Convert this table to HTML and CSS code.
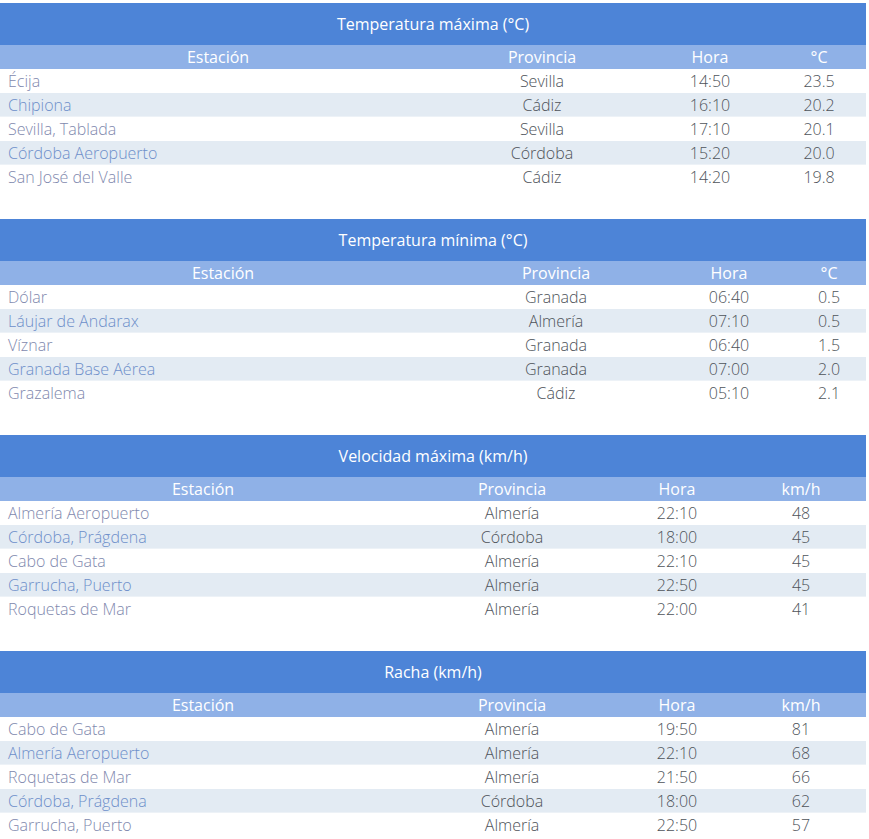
FILE: index.html
```html
<!DOCTYPE html>
<html lang="es">
<head>
<meta charset="utf-8">
<title>Extremos</title>
<link rel="stylesheet" href="styles.css">
</head>
<body>
<div class="page">

<table class="ext t-tmax">
<colgroup><col class="c1"><col class="c2"><col class="c3"><col class="c4"></colgroup>
<thead>
<tr class="title"><th colspan="4">Temperatura máxima (°C)</th></tr>
<tr class="head"><th>Estación</th><th>Provincia</th><th>Hora</th><th>°C</th></tr>
</thead>
<tbody>
<tr><td class="st"><a href="#">Écija</a></td><td>Sevilla</td><td>14:50</td><td>23.5</td></tr>
<tr><td class="st"><a href="#">Chipiona</a></td><td>Cádiz</td><td>16:10</td><td>20.2</td></tr>
<tr><td class="st"><a href="#">Sevilla, Tablada</a></td><td>Sevilla</td><td>17:10</td><td>20.1</td></tr>
<tr><td class="st"><a href="#">Córdoba Aeropuerto</a></td><td>Córdoba</td><td>15:20</td><td>20.0</td></tr>
<tr><td class="st"><a href="#">San José del Valle</a></td><td>Cádiz</td><td>14:20</td><td>19.8</td></tr>
</tbody>
</table>

<table class="ext t-tmin">
<colgroup><col class="c1"><col class="c2"><col class="c3"><col class="c4"></colgroup>
<thead>
<tr class="title"><th colspan="4">Temperatura mínima (°C)</th></tr>
<tr class="head"><th>Estación</th><th>Provincia</th><th>Hora</th><th>°C</th></tr>
</thead>
<tbody>
<tr><td class="st"><a href="#">Dólar</a></td><td>Granada</td><td>06:40</td><td>0.5</td></tr>
<tr><td class="st"><a href="#">Láujar de Andarax</a></td><td>Almería</td><td>07:10</td><td>0.5</td></tr>
<tr><td class="st"><a href="#">Víznar</a></td><td>Granada</td><td>06:40</td><td>1.5</td></tr>
<tr><td class="st"><a href="#">Granada Base Aérea</a></td><td>Granada</td><td>07:00</td><td>2.0</td></tr>
<tr><td class="st"><a href="#">Grazalema</a></td><td>Cádiz</td><td>05:10</td><td>2.1</td></tr>
</tbody>
</table>

<table class="ext t-wind">
<colgroup><col class="c1"><col class="c2"><col class="c3"><col class="c4"></colgroup>
<thead>
<tr class="title"><th colspan="4">Velocidad máxima (km/h)</th></tr>
<tr class="head"><th>Estación</th><th>Provincia</th><th>Hora</th><th>km/h</th></tr>
</thead>
<tbody>
<tr><td class="st"><a href="#">Almería Aeropuerto</a></td><td>Almería</td><td>22:10</td><td>48</td></tr>
<tr><td class="st"><a href="#">Córdoba, Prágdena</a></td><td>Córdoba</td><td>18:00</td><td>45</td></tr>
<tr><td class="st"><a href="#">Cabo de Gata</a></td><td>Almería</td><td>22:10</td><td>45</td></tr>
<tr><td class="st"><a href="#">Garrucha, Puerto</a></td><td>Almería</td><td>22:50</td><td>45</td></tr>
<tr><td class="st"><a href="#">Roquetas de Mar</a></td><td>Almería</td><td>22:00</td><td>41</td></tr>
</tbody>
</table>

<table class="ext t-wind">
<colgroup><col class="c1"><col class="c2"><col class="c3"><col class="c4"></colgroup>
<thead>
<tr class="title"><th colspan="4">Racha (km/h)</th></tr>
<tr class="head"><th>Estación</th><th>Provincia</th><th>Hora</th><th>km/h</th></tr>
</thead>
<tbody>
<tr><td class="st"><a href="#">Cabo de Gata</a></td><td>Almería</td><td>19:50</td><td>81</td></tr>
<tr><td class="st"><a href="#">Almería Aeropuerto</a></td><td>Almería</td><td>22:10</td><td>68</td></tr>
<tr><td class="st"><a href="#">Roquetas de Mar</a></td><td>Almería</td><td>21:50</td><td>66</td></tr>
<tr><td class="st"><a href="#">Córdoba, Prágdena</a></td><td>Córdoba</td><td>18:00</td><td>62</td></tr>
<tr><td class="st"><a href="#">Garrucha, Puerto</a></td><td>Almería</td><td>22:50</td><td>57</td></tr>
</tbody>
</table>

</div>
</body>
</html>
```

FILE: styles.css
```css
html, body {
  margin: 0;
  padding: 0;
  background: #ffffff;
}

body {
  font-family: "Open Sans", "DejaVu Sans", sans-serif;
  color: #555a60;
}

.page {
  width: 866px;
  padding-top: 3px;
  display: flex;
  flex-direction: column;
  gap: 30px;
}

.ext {
  width: 866px;
  border-collapse: collapse;
  border-spacing: 0;
  table-layout: fixed;
}

.ext th,
.ext td {
  padding: 0;
  text-align: center;
  white-space: nowrap;
}

.ext .title th {
  height: 42px;
  background: #4d84d7;
  color: #ffffff;
  font-size: 16px;
  font-weight: 400;
}

.ext .head th {
  height: 24px;
  background: #8fb1e7;
  color: #ffffff;
  font-size: 16px;
  font-weight: 400;
  line-height: 24px;
}

.ext tbody td {
  height: 24px;
  font-size: 16px;
  font-weight: 300;
  line-height: 24px;
  color: #4e535a;
}

.ext tbody tr:nth-child(even) td {
  background-color: #e3ebf3;
  background-image: linear-gradient(to top, #edf2f7 1px, transparent 1px);
}

.ext td.st {
  text-align: left;
  padding-left: 8px;
}

.ext td.st a {
  color: #7f89ae;
  text-decoration: none;
}

.ext tbody tr:nth-child(even) td.st a {
  color: #6e8fca;
}

/* column widths */
.t-tmax .c1 { width: 436px; }
.t-tmax .c2 { width: 212px; }
.t-tmax .c3 { width: 124px; }
.t-tmax .c4 { width: 94px; }

.t-tmin .c1 { width: 446px; }
.t-tmin .c2 { width: 220px; }
.t-tmin .c3 { width: 126px; }
.t-tmin .c4 { width: 74px; }

.t-wind .c1 { width: 406px; }
.t-wind .c2 { width: 212px; }
.t-wind .c3 { width: 118px; }
.t-wind .c4 { width: 130px; }
```
